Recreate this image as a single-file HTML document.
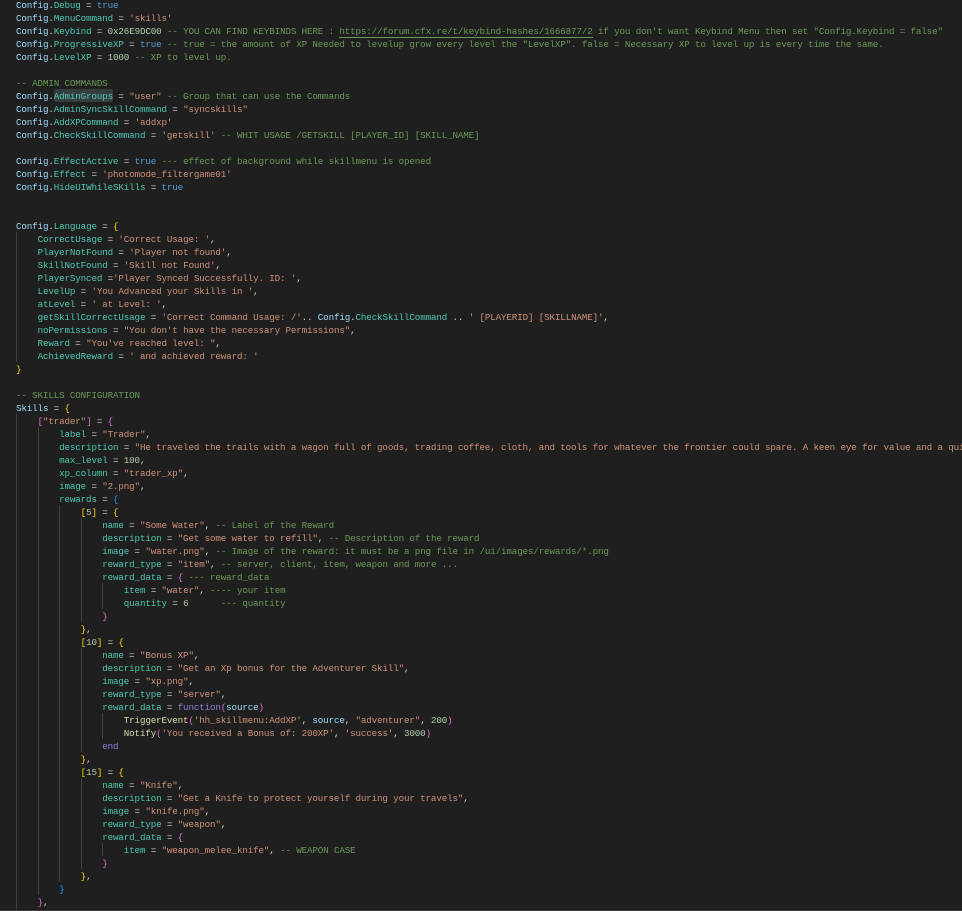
<!DOCTYPE html>
<html>
<head>
<meta charset="utf-8">
<style>
html,body{margin:0;padding:0;background:#1f1f1f;}
body{width:962px;height:911px;overflow:hidden;position:relative;}
#code{position:absolute;left:16px;top:-1px;width:946px;height:912px;overflow:hidden;font-family:"Liberation Mono",monospace;font-size:9.2px;letter-spacing:-0.125px;color:#d4d4d4;}
.l{height:13px;line-height:13px;white-space:pre;}
.v{color:#9cdcfe}.t{color:#4ec9b0}.k{color:#569cd6}.s{color:#ce9178}.c{color:#6a9955}.n{color:#b5cea8}
.g{color:#ffd700}.m{color:#da70d6}.b{color:#179fff}.y{color:#dcdcaa}.f{color:#8a7fd8}
.gd{position:absolute;width:1px;background:#404040;}
#sel{position:absolute;left:54px;top:89px;width:59px;height:13px;background:#343e40;border-radius:2px;}
#lnk{position:absolute;left:339px;top:37px;width:254px;height:1px;background:#6a9955;}
#bot{position:absolute;left:0;top:910px;width:962px;height:1px;background:#3a3a3a;}
</style>
</head>
<body>
<div id="sel"></div>
<div id="lnk"></div>
<div class="gd" style="left:16px;top:232px;height:130px"></div>
<div class="gd" style="left:16px;top:414px;height:497px"></div>
<div class="gd" style="left:38px;top:427px;height:468px"></div>
<div class="gd" style="left:59px;top:505px;height:377px"></div>
<div class="gd" style="left:81px;top:518px;height:104px"></div>
<div class="gd" style="left:81px;top:648px;height:104px"></div>
<div class="gd" style="left:81px;top:778px;height:91px"></div>
<div class="gd" style="left:102px;top:583px;height:26px"></div>
<div class="gd" style="left:102px;top:713px;height:26px"></div>
<div class="gd" style="left:102px;top:843px;height:13px"></div>
<div id="bot"></div>
<div id="code">
<div class="l"><span class="v">Config</span>.<span class="t">Debug</span> = <span class="k">true</span></div>
<div class="l"><span class="v">Config</span>.<span class="t">MenuCommand</span> = <span class="s">'skills'</span></div>
<div class="l"><span class="v">Config</span>.<span class="t">Keybind</span> = <span class="n">0x26E9DC00</span> <span class="c">-- YOU CAN FIND KEYBINDS HERE : https://forum.cfx.re/t/keybind-hashes/1666877/2 if you don't want Keybind Menu then set "Config.Keybind = false"</span></div>
<div class="l"><span class="v">Config</span>.<span class="t">ProgressiveXP</span> = <span class="k">true</span> <span class="c">-- true = the amount of XP Needed to levelup grow every level the "LevelXP". false = Necessary XP to level up is every time the same.</span></div>
<div class="l"><span class="v">Config</span>.<span class="t">LevelXP</span> = <span class="n">1000</span> <span class="c">-- XP to level up.</span></div>
<div class="l"></div>
<div class="l"><span class="c">-- ADMIN COMMANDS</span></div>
<div class="l"><span class="v">Config</span>.<span class="t">AdminGroups</span> = <span class="s">"user"</span> <span class="c">-- Group that can use the Commands</span></div>
<div class="l"><span class="v">Config</span>.<span class="t">AdminSyncSkillCommand</span> = <span class="s">"syncskills"</span></div>
<div class="l"><span class="v">Config</span>.<span class="t">AddXPCommand</span> = <span class="s">'addxp'</span></div>
<div class="l"><span class="v">Config</span>.<span class="t">CheckSkillCommand</span> = <span class="s">'getskill'</span> <span class="c">-- WHIT USAGE /GETSKILL [PLAYER_ID] [SKILL_NAME]</span></div>
<div class="l"></div>
<div class="l"><span class="v">Config</span>.<span class="t">EffectActive</span> = <span class="k">true</span> <span class="c">--- effect of background while skillmenu is opened</span></div>
<div class="l"><span class="v">Config</span>.<span class="t">Effect</span> = <span class="s">'photomode_filtergame01'</span></div>
<div class="l"><span class="v">Config</span>.<span class="t">HideUIWhileSKills</span> = <span class="k">true</span></div>
<div class="l"></div>
<div class="l"></div>
<div class="l"><span class="v">Config</span>.<span class="t">Language</span> = <span class="g">{</span></div>
<div class="l">    <span class="t">CorrectUsage</span> = <span class="s">'Correct Usage: '</span>,</div>
<div class="l">    <span class="t">PlayerNotFound</span> = <span class="s">'Player not found'</span>,</div>
<div class="l">    <span class="t">SkillNotFound</span> = <span class="s">'Skill not Found'</span>,</div>
<div class="l">    <span class="t">PlayerSynced</span> =<span class="s">'Player Synced Successfully. ID: '</span>,</div>
<div class="l">    <span class="t">LevelUp</span> = <span class="s">'You Advanced your Skills in '</span>,</div>
<div class="l">    <span class="t">atLevel</span> = <span class="s">' at Level: '</span>,</div>
<div class="l">    <span class="t">getSkillCorrectUsage</span> = <span class="s">'Correct Command Usage: /'</span>.. <span class="v">Config</span>.<span class="t">CheckSkillCommand</span> .. <span class="s">' [PLAYERID] [SKILLNAME]'</span>,</div>
<div class="l">    <span class="t">noPermissions</span> = <span class="s">"You don't have the necessary Permissions"</span>,</div>
<div class="l">    <span class="t">Reward</span> = <span class="s">"You've reached level: "</span>,</div>
<div class="l">    <span class="t">AchievedReward</span> = <span class="s">' and achieved reward: '</span></div>
<div class="l"><span class="g">}</span></div>
<div class="l"></div>
<div class="l"><span class="c">-- SKILLS CONFIGURATION</span></div>
<div class="l"><span class="v">Skills</span> = <span class="g">{</span></div>
<div class="l">    <span class="m">[</span><span class="s">"trader"</span><span class="m">]</span> = <span class="m">{</span></div>
<div class="l">        <span class="t">label</span> = <span class="s">"Trader"</span>,</div>
<div class="l">        <span class="t">description</span> = <span class="s">"He traveled the trails with a wagon full of goods, trading coffee, cloth, and tools for whatever the frontier could spare. A keen eye for value and a quick tongue"</span>,</div>
<div class="l">        <span class="t">max_level</span> = <span class="n">100</span>,</div>
<div class="l">        <span class="t">xp_column</span> = <span class="s">"trader_xp"</span>,</div>
<div class="l">        <span class="t">image</span> = <span class="s">"2.png"</span>,</div>
<div class="l">        <span class="t">rewards</span> = <span class="b">{</span></div>
<div class="l">            <span class="g">[</span><span class="n">5</span><span class="g">]</span> = <span class="g">{</span></div>
<div class="l">                <span class="t">name</span> = <span class="s">"Some Water"</span>, <span class="c">-- Label of the Reward</span></div>
<div class="l">                <span class="t">description</span> = <span class="s">"Get some water to refill"</span>, <span class="c">-- Description of the reward</span></div>
<div class="l">                <span class="t">image</span> = <span class="s">"water.png"</span>, <span class="c">-- Image of the reward: it must be a png file in /ui/images/rewards/*.png</span></div>
<div class="l">                <span class="t">reward_type</span> = <span class="s">"item"</span>, <span class="c">-- server, client, item, weapon and more ...</span></div>
<div class="l">                <span class="t">reward_data</span> = <span class="m">{</span> <span class="c">--- reward_data</span></div>
<div class="l">                    <span class="t">item</span> = <span class="s">"water"</span>, <span class="c">---- your item</span></div>
<div class="l">                    <span class="t">quantity</span> = <span class="n">6</span>      <span class="c">--- quantity</span></div>
<div class="l">                <span class="m">}</span></div>
<div class="l">            <span class="g">}</span>,</div>
<div class="l">            <span class="g">[</span><span class="n">10</span><span class="g">]</span> = <span class="g">{</span></div>
<div class="l">                <span class="t">name</span> = <span class="s">"Bonus XP"</span>,</div>
<div class="l">                <span class="t">description</span> = <span class="s">"Get an Xp bonus for the Adventurer Skill"</span>,</div>
<div class="l">                <span class="t">image</span> = <span class="s">"xp.png"</span>,</div>
<div class="l">                <span class="t">reward_type</span> = <span class="s">"server"</span>,</div>
<div class="l">                <span class="t">reward_data</span> = <span class="f">function</span><span class="m">(</span><span class="v">source</span><span class="m">)</span></div>
<div class="l">                    <span class="y">TriggerEvent</span><span class="m">(</span><span class="s">'hh_skillmenu:AddXP'</span>, <span class="v">source</span>, <span class="s">"adventurer"</span>, <span class="n">200</span><span class="m">)</span></div>
<div class="l">                    <span class="y">Notify</span><span class="m">(</span><span class="s">'You received a Bonus of: 200XP'</span>, <span class="s">'success'</span>, <span class="n">3000</span><span class="m">)</span></div>
<div class="l">                <span class="f">end</span></div>
<div class="l">            <span class="g">}</span>,</div>
<div class="l">            <span class="g">[</span><span class="n">15</span><span class="g">]</span> = <span class="g">{</span></div>
<div class="l">                <span class="t">name</span> = <span class="s">"Knife"</span>,</div>
<div class="l">                <span class="t">description</span> = <span class="s">"Get a Knife to protect yourself during your travels"</span>,</div>
<div class="l">                <span class="t">image</span> = <span class="s">"knife.png"</span>,</div>
<div class="l">                <span class="t">reward_type</span> = <span class="s">"weapon"</span>,</div>
<div class="l">                <span class="t">reward_data</span> = <span class="m">{</span></div>
<div class="l">                    <span class="t">item</span> = <span class="s">"weapon_melee_knife"</span>, <span class="c">-- WEAPON CASE</span></div>
<div class="l">                <span class="m">}</span></div>
<div class="l">            <span class="g">}</span>,</div>
<div class="l">        <span class="b">}</span></div>
<div class="l">    <span class="m">}</span>,</div>
</div>
</body>
</html>
